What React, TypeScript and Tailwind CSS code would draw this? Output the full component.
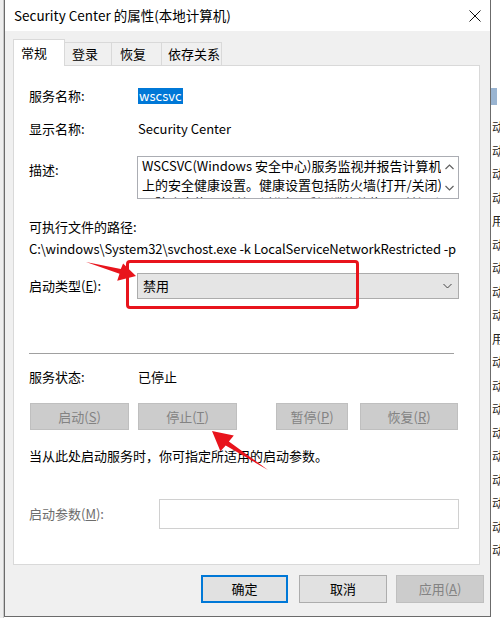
import React from 'react';

const FONT = { fontFamily: '"Noto Sans CJK SC", "Liberation Sans", sans-serif' };

const sideChars = ['动', '动', '动', '动', '用', '动', '动', '动', '动', '用', '动', '动', '动', '动', '动', '动', '动', '动', '动'];

const DisabledButton: React.FC<{ w: string; label: string; hot: string }> = ({ w, label, hot }) => (
  <div className={`${w} h-full flex items-center justify-center bg-[#cccccc] border border-[#bfbfbf] text-[#838383]`}>
    {label}(<span className="underline">{hot}</span>)
  </div>
);

const App: React.FC = () => {
  return (
    <div className="relative w-[500px] h-[618px] overflow-hidden bg-white flex text-[13px] text-black" style={FONT}>
      {/* background window, left edge */}
      <div className="w-[4px] h-full bg-[#eeeeee] border-r border-[#c8c8c8]" />

      {/* dialog */}
      <div className="w-[487px] h-[617px] flex flex-col border-x border-b border-[#6b6b6b]">
        <div className="h-[31px] bg-white flex items-center pl-[9px] pr-[8px] justify-between">
          <span className="text-[13.5px] leading-none">Security Center 的属性(本地计算机)</span>
          <svg width="12" height="12" viewBox="0 0 12 12" className="mr-[1px]">
            <path d="M0.5 0.5 L11.5 11.5 M11.5 0.5 L0.5 11.5" stroke="#111" strokeWidth="1" />
          </svg>
        </div>

        <div className="flex-1 bg-[#f0f0f0] flex flex-col">
          {/* tabs */}
          <div className="h-[34px] flex items-end pl-[8px] whitespace-nowrap">
            <div className="relative z-10 w-[52px] h-[27px] -mb-px bg-white border border-b-0 border-[#d9d9d9] pl-[7px] pt-[3px]">常规</div>
            <div className="w-[48px] h-[23px] -ml-px bg-[#f0f0f0] border border-b-0 border-[#d9d9d9] pl-[7px] pt-[1px]">登录</div>
            <div className="w-[51px] h-[23px] -ml-px bg-[#f0f0f0] border border-b-0 border-[#d9d9d9] pl-[8px] pt-[1px]">恢复</div>
            <div className="w-[61px] h-[23px] -ml-px bg-[#f0f0f0] border border-b-0 border-[#d9d9d9] pl-[6px] pt-[1px]">依存关系</div>
          </div>

          {/* panel */}
          <div className="ml-[8px] mr-[10px] h-[500px] bg-white border border-[#d9d9d9] pt-[19px] pl-[15px] pr-[20px]">
            <div className="h-[22px] flex items-center">
              <span className="w-[109px]">服务名称:</span>
              <span className="bg-[#0078d7] text-white leading-[16px] px-[1px]">wscsvc</span>
            </div>
            <div className="mt-[11px] h-[22px] flex items-center">
              <span className="w-[109px]">显示名称:</span>
              <span>Security Center</span>
            </div>
            <div className="mt-[16px] flex">
              <span className="w-[108px] leading-[22px] pt-[3px]">描述:</span>
              <div className="flex-1 h-[43px] border border-[#abadb3] flex overflow-hidden">
                <div className="flex-1 pl-[4px] leading-[18.5px] whitespace-nowrap overflow-hidden">
                  <div>WSCSVC(Windows 安全中心)服务监视并报告计算机</div>
                  <div>上的安全健康设置。健康设置包括防火墙(打开/关闭)</div>
                  <div>、防病毒(打开/关闭/过期)、反间谍软件(打开/关闭/过</div>
                </div>
                <div className="w-[17px] flex flex-col items-center justify-between py-[7px]">
                  <svg width="9" height="6" viewBox="0 0 9 6">
                    <path d="M0.5 5 L4.5 1 L8.5 5" fill="none" stroke="#606060" strokeWidth="1.2" />
                  </svg>
                  <svg width="9" height="6" viewBox="0 0 9 6">
                    <path d="M0.5 1 L4.5 5 L8.5 1" fill="none" stroke="#606060" strokeWidth="1.2" />
                  </svg>
                </div>
              </div>
            </div>
            <div className="mt-[17px] h-[22px] flex items-center">可执行文件的路径:</div>
            <div className="h-[22px] flex items-center whitespace-nowrap tracking-[-0.08px]">
              C:\windows\System32\svchost.exe -k LocalServiceNetworkRestricted -p
            </div>
            <div className="mt-[13px] h-[26px] flex items-center">
              <span className="w-[108px]">
                启动类型(<span className="underline">E</span>):
              </span>
              <div className="flex-1 h-full bg-[#e5e5e5] border border-[#acacac] flex items-center justify-between pl-[5px] pr-[6px]">
                <span>禁用</span>
                <svg width="9" height="6" viewBox="0 0 9 6">
                  <path d="M0.5 1 L4.5 5 L8.5 1" fill="none" stroke="#444" strokeWidth="1" />
                </svg>
              </div>
            </div>

            <div className="mt-[54px] mr-[5px] h-px bg-[#a0a0a0]" />

            <div className="mt-[12px] h-[22px] flex items-center">
              <span className="w-[109px]">服务状态:</span>
              <span>已停止</span>
            </div>
            <div className="mt-[15px] h-[27px] flex pl-[1px]">
              <DisabledButton w="w-[99px]" label="启动" hot="S" />
              <div className="w-[9px]" />
              <DisabledButton w="w-[99px]" label="停止" hot="T" />
              <div className="w-[39px]" />
              <DisabledButton w="w-[72px]" label="暂停" hot="P" />
              <div className="w-[12px]" />
              <DisabledButton w="w-[98px]" label="恢复" hot="R" />
            </div>
            <div className="mt-[15px] h-[22px] flex items-center">当从此处启动服务时，你可指定所适用的启动参数。</div>
            <div className="mt-[32px] h-[30px] flex items-center">
              <span className="w-[130px] text-[#6d6d6d]">
                启动参数(<span className="underline">M</span>):
              </span>
              <div className="flex-1 h-full border border-[#d0d0d0] bg-white" />
            </div>
          </div>

          {/* dialog buttons */}
          <div className="mt-[10px] h-[28px] flex justify-end pr-[6px]">
            <div className="w-[87px] h-full flex items-center justify-center bg-[#e1e1e1] border-2 border-[#0078d7]">确定</div>
            <div className="w-[11px]" />
            <div className="w-[88px] h-full flex items-center justify-center bg-[#e1e1e1] border border-[#adadad]">取消</div>
            <div className="w-[9px]" />
            <div className="w-[88px] h-full flex items-center justify-center bg-[#cccccc] border border-[#bfbfbf] text-[#838383]">
              应用(<span className="underline">A</span>)
            </div>
          </div>
        </div>
      </div>

      {/* background window, right edge */}
      <div className="flex-1 h-full overflow-hidden flex flex-col">
        <div className="mt-[88px] h-[17px] w-[6px] bg-[#99b4d1]" />
        <div className="mt-[10px] flex flex-col">
          {sideChars.map((c, i) => (
            <div key={i} className="h-[23.5px] leading-[23.5px] text-[12px] text-[#222] pl-[1px]">
              {c}
            </div>
          ))}
        </div>
      </div>

      {/* annotations */}
      <div className="absolute left-[126px] top-[260px] w-[233px] h-[49px] border-[3px] border-[#e8141c] rounded-[4px]" />
      <svg className="absolute left-0 top-0 pointer-events-none" width="500" height="618">
        <polygon
          points="86,262 119.5,273.7 117.2,280.7 136,276 123.1,263.4 120.8,269"
          fill="#e8141c"
        />
        <polygon
          points="268,470 228.9,441.5 233.8,435.6 212,431 220.4,451.3 225.7,445.5"
          fill="#e8141c"
        />
      </svg>
    </div>
  );
};

export default App;
